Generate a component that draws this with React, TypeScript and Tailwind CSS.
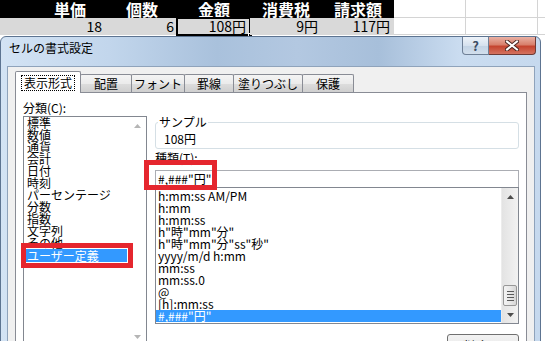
import React from 'react';

type Col = { head: string; value: string; selected?: boolean };

const columns: Col[] = [
  { head: '単価', value: '18' },
  { head: '個数', value: '6' },
  { head: '金額', value: '108円', selected: true },
  { head: '消費税', value: '9円' },
  { head: '請求額', value: '117円' },
];

const tabs = [
  { label: '表示形式', width: 'w-[66px]', active: true },
  { label: '配置', width: 'w-[52px]' },
  { label: 'フォント', width: 'w-[54px]' },
  { label: '罫線', width: 'w-[50px]' },
  { label: '塗りつぶし', width: 'w-[70px]' },
  { label: '保護', width: 'w-[52px]' },
];

const categories = [
  '標準',
  '数値',
  '通貨',
  '会計',
  '日付',
  '時刻',
  'パーセンテージ',
  '分数',
  '指数',
  '文字列',
  'その他',
  'ユーザー定義',
];

const formats = [
  'h:mm:ss AM/PM',
  'h:mm',
  'h:mm:ss',
  'h"時"mm"分"',
  'h"時"mm"分"ss"秒"',
  'yyyy/m/d h:mm',
  'mm:ss',
  'mm:ss.0',
  '@',
  '[h]:mm:ss',
  '#,###"円"',
];

function Sheet() {
  return (
    <div className="flex flex-col">
      <div className="flex h-[18px]">
        <div className="w-[34px] bg-black" />
        {columns.map((c) => (
          <div
            key={c.head}
            className="w-[72px] bg-black text-white font-bold text-[16px] leading-[18px] text-center"
          >
            {c.head}
          </div>
        ))}
        <div className="w-[72px] border-r border-b border-[#d4d4d4]" />
        <div className="w-[72px] border-r border-b border-[#d4d4d4]" />
        <div className="flex-1 border-b border-[#d4d4d4]" />
      </div>
      <div className="flex h-[17px]">
        <div className="w-[34px] bg-[#d9d9d9]" />
        {columns.map((c) => (
          <div
            key={c.head}
            className="relative w-[72px] bg-[#d9d9d9] text-[14px] leading-[17px] text-right pr-[4px]"
          >
            {c.value}
            {c.selected && (
              <>
                <div className="absolute -left-[2px] -top-[1px] -right-[1px] -bottom-[1px] border-2 border-black" />
                <div className="absolute -right-[3px] -bottom-[3px] w-[5px] h-[5px] bg-black border border-white" />
              </>
            )}
          </div>
        ))}
        <div className="w-[72px] border-r border-b border-[#d4d4d4]" />
        <div className="w-[72px] border-r border-b border-[#d4d4d4]" />
        <div className="flex-1 border-b border-[#d4d4d4]" />
      </div>
    </div>
  );
}

function ScrollArrow({ up, color }: { up?: boolean; color: string }) {
  return (
    <svg width="7" height="4" viewBox="0 0 7 4">
      <path d={up ? 'M0 4 L3.5 0 L7 4 Z' : 'M0 0 L3.5 4 L7 0 Z'} fill={color} />
    </svg>
  );
}

function CaptionButtons() {
  return (
    <div className="ml-auto mr-[4px] flex">
      <div className="w-[27px] h-[18px] flex items-center justify-center rounded-bl-[4px] border border-t-0 border-[#6e7f96] bg-[linear-gradient(180deg,#eef3f9_0%,#d6e1ee_50%,#c2d2e4_51%,#d2dfed_100%)] text-[13px] leading-[16px] font-bold text-[#3c4d63]">
        ?
      </div>
      <div className="w-[47px] h-[18px] flex items-center justify-center rounded-br-[4px] border border-t-0 border-l-0 border-[#6e3a35] bg-[linear-gradient(180deg,#eab1a4_0%,#d8806c_45%,#c5442f_55%,#d47360_100%)]">
        <svg width="14" height="11" viewBox="0 0 14 11">
          <path d="M2 1.5 L12 9.5 M12 1.5 L2 9.5" stroke="#4a2621" strokeWidth="4" strokeLinecap="square" />
          <path d="M2 1.5 L12 9.5 M12 1.5 L2 9.5" stroke="#ffffff" strokeWidth="2" strokeLinecap="square" />
        </svg>
      </div>
    </div>
  );
}

function Tabs() {
  return (
    <div className="flex items-end h-[21px]">
      {tabs.map((t) =>
        t.active ? (
          <div
            key={t.label}
            className={`${t.width} relative z-10 h-[22px] -mb-px flex items-center justify-center bg-white border border-b-0 border-[#898c95] rounded-t-[2px]`}
          >
            <span className="border border-dotted border-black px-[2px] text-[12px] leading-[14px]">
              {t.label}
            </span>
          </div>
        ) : (
          <div
            key={t.label}
            className={`${t.width} h-[18px] -ml-px flex items-center justify-center border border-b-0 border-[#898c95] rounded-t-[2px] bg-[linear-gradient(180deg,#f4f4f4_0%,#ebebeb_50%,#dddddd_51%,#cfcfcf_100%)] text-[12px] leading-[16px]`}
          >
            {t.label}
          </div>
        )
      )}
    </div>
  );
}

function CategoryList() {
  return (
    <div className="flex flex-col w-[124px]">
      <div className="text-[12px] leading-[12px]">分類(C):</div>
      <div className="mt-[2px] h-[231px] flex border border-[#828790] bg-white">
        <div className="flex-1 flex flex-col">
          {categories.map((c) => (
            <div
              key={c}
              className={
                c === 'ユーザー定義'
                  ? 'h-[13px] ml-[1px] mr-[2px] pl-[2px] bg-[#3399ff] text-white text-[12px] leading-[13px] whitespace-nowrap'
                  : 'h-[12px] pl-[3px] text-[12px] leading-[12px] whitespace-nowrap'
              }
            >
              {c}
            </div>
          ))}
        </div>
        <div className="w-[17px] flex flex-col items-center justify-between py-[7px]">
          <ScrollArrow up color="#b5b5b5" />
          <ScrollArrow color="#b5b5b5" />
        </div>
      </div>
    </div>
  );
}

function FormatSide() {
  return (
    <div className="w-[364px] flex flex-col">
      <div className="relative mt-[20px] h-[27px] border border-[#d5dfe5] rounded-[3px] pl-[8px] pt-[10px]">
        <span className="absolute left-[2px] -top-[7px] bg-white px-[1px] text-[12px] leading-[12px]">
          サンプル
        </span>
        <div className="text-[12px] leading-[12px]">108円</div>
      </div>
      <div className="mt-[3px] text-[12px] leading-[12px]">種類(T):</div>
      <div className="mt-[6px] h-[18px] border border-[#abadb3] bg-white pl-[2px] text-[12px] leading-[16px]">
        #,###"円"
      </div>
      <div className="-mt-px h-[137px] flex border border-[#828790] bg-white">
        <div className="flex-1 flex flex-col pt-[2px]">
          {formats.map((f) => (
            <div
              key={f}
              className={
                f === '#,###"円"'
                  ? 'h-[12px] pl-[2px] bg-[#3399ff] text-white text-[12px] leading-[12px] whitespace-nowrap'
                  : 'h-[12px] pl-[2px] text-[12px] leading-[12px] whitespace-nowrap'
              }
            >
              {f}
            </div>
          ))}
        </div>
        <div className="w-[17px] flex flex-col bg-[linear-gradient(90deg,#e3e3e3_0%,#f2f2f2_100%)] border-l border-[#ececec]">
          <div className="h-[17px] flex items-center justify-center">
            <ScrollArrow up color="#4d4d4d" />
          </div>
          <div className="flex-1" />
          <div className="h-[21px] mx-[1px] flex flex-col items-center justify-center gap-[2px] rounded-[2px] border border-[#979797] bg-[linear-gradient(90deg,#f3f3f3_0%,#e8e8e8_50%,#d6d6d6_100%)]">
            <div className="w-[7px] h-px bg-[#5a5a5a]" />
            <div className="w-[7px] h-px bg-[#5a5a5a]" />
            <div className="w-[7px] h-px bg-[#5a5a5a]" />
            <div className="w-[7px] h-px bg-[#5a5a5a]" />
          </div>
          <div className="h-[17px] flex items-center justify-center">
            <ScrollArrow color="#4d4d4d" />
          </div>
        </div>
      </div>
      <div className="mt-[10px] ml-auto w-[72px] h-[23px] flex items-center justify-center rounded-[3px] border border-[#707070] bg-[linear-gradient(180deg,#f2f2f2_0%,#ebebeb_50%,#dddddd_51%,#cfcfcf_100%)] text-[12px] leading-[14px]">
        削除(D)
      </div>
    </div>
  );
}

function FormatDialog() {
  return (
    <div className="absolute left-0 top-[36px] w-[541px] h-[330px] flex flex-col rounded-t-[6px] border border-[#5d7491] bg-[linear-gradient(90deg,#d3e3f4_0%,#c2d6ec_20%,#a9c1dc_40%,#b3c8e1_55%,#a7bfda_70%,#cadcf0_85%,#c6d9ee_100%)]">
      <div className="h-[29px] flex items-start">
        <span className="pl-[8px] pt-[3px] text-[12px] leading-[16px]">セルの書式設定</span>
        <CaptionButtons />
      </div>
      <div className="flex-1 ml-[6px] mr-[5px] flex flex-col border border-[#8fa3bb] bg-[#f0f0f0] pl-[7px] pr-[7px] pt-[4px]">
        <Tabs />
        <div className="flex-1 flex gap-[8px] bg-white border border-[#898c95] pl-[7px] pt-[9px]">
          <CategoryList />
          <FormatSide />
        </div>
      </div>
    </div>
  );
}

export default function App() {
  return (
    <div className="relative w-[545px] h-[341px] overflow-hidden bg-white text-black font-['Noto_Sans_CJK_JP',sans-serif]">
      <Sheet />
      <FormatDialog />
      {/* red highlight boxes */}
      <div className="absolute left-[144px] top-[160px] w-[73px] h-[30px] border-[5px] border-[#e5262e]" />
      <div className="absolute left-[21px] top-[243px] w-[112px] h-[25px] border-[5px] border-[#e5262e]" />
    </div>
  );
}
